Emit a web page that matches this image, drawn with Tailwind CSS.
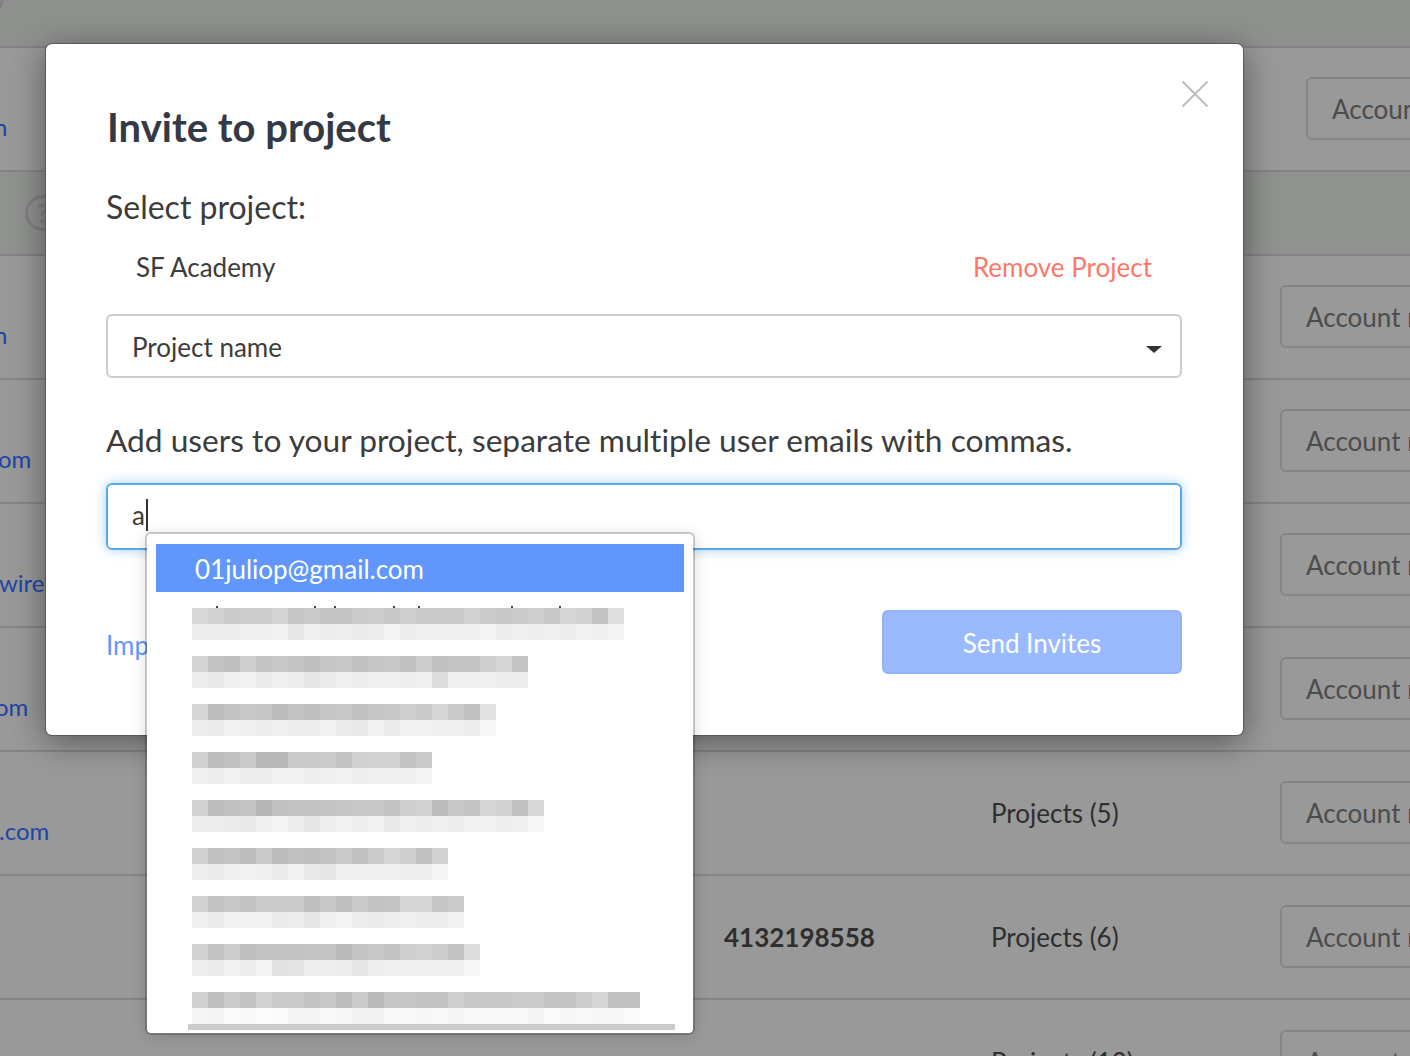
<!DOCTYPE html>
<html lang="en">
<head>
    <meta charset="UTF-8">
    <title>Invite to project</title>
    <script src="https://cdn.jsdelivr.net/npm/@tailwindcss/browser@4"></script>
</head>
<body class="relative w-[1410px] h-[1056px] overflow-hidden bg-[#999999] font-['Lato',sans-serif] [font-variant-ligatures:none] text-[26px] text-[#2e2e2e]">
    <!-- Table behind the modal -->
    <div class="flex flex-col">
        <div class="relative h-[48px] bg-[#8f918f] border-b-2 border-[#828382]">
            <div class="absolute -left-[32px] -top-[20px] w-[36px] h-[36px] rounded-full border-[3px] border-[#808080]"></div>
        </div>
        <div class="flex items-center h-[124px] border-b-2 border-[#858585]">
            <div class="shrink-0 w-[1306px] mt-[36px] text-[24px] text-[#1c45a5]"><span class="block -ml-[6px]">n</span></div>
            <div class="shrink-0 flex items-center w-[200px] h-[63px] -mt-[2px] pt-[2px] pl-[24px] border-2 border-[#858585] rounded-md text-[#4c4c4c] whitespace-nowrap">Account</div>
        </div>
        <div class="flex items-center h-[84px] bg-[#909290] border-b-2 border-[#828382] pl-[25px]">
            <div class="flex items-center justify-center w-[36px] h-[36px] rounded-full border-[3px] border-[#808080] text-[#808080] font-bold">?</div>
        </div>
        <div class="flex items-center h-[124px] border-b-2 border-[#858585]">
            <div class="shrink-0 w-[1280px] mt-[36px] text-[24px] text-[#1c45a5]"><span class="block -ml-[6px]">n</span></div>
            <div class="shrink-0 flex items-center w-[250px] h-[63px] -mt-[2px] pt-[2px] pl-[24px] border-2 border-[#858585] rounded-md text-[#4c4c4c] whitespace-nowrap">Account manager</div>
        </div>
        <div class="flex items-center h-[124px] border-b-2 border-[#858585]">
            <div class="shrink-0 w-[1280px] mt-[36px] text-[24px] text-[#1c45a5]"><span class="block -ml-[2px]">om</span></div>
            <div class="shrink-0 flex items-center w-[250px] h-[63px] -mt-[2px] pt-[2px] pl-[24px] border-2 border-[#858585] rounded-md text-[#4c4c4c] whitespace-nowrap">Account manager</div>
        </div>
        <div class="flex items-center h-[124px] border-b-2 border-[#858585]">
            <div class="shrink-0 w-[1280px] mt-[36px] text-[24px] text-[#1c45a5]"><span class="block -ml-[1px]">wire.</span></div>
            <div class="shrink-0 flex items-center w-[250px] h-[63px] -mt-[2px] pt-[2px] pl-[24px] border-2 border-[#858585] rounded-md text-[#4c4c4c] whitespace-nowrap">Account manager</div>
        </div>
        <div class="flex items-center h-[124px] border-b-2 border-[#858585]">
            <div class="shrink-0 w-[1280px] mt-[36px] text-[24px] text-[#1c45a5]"><span class="block -ml-[5px]">om</span></div>
            <div class="shrink-0 flex items-center w-[250px] h-[63px] -mt-[2px] pt-[2px] pl-[24px] border-2 border-[#858585] rounded-md text-[#4c4c4c] whitespace-nowrap">Account manager</div>
        </div>
        <div class="flex items-center h-[124px] border-b-2 border-[#858585]">
            <div class="shrink-0 w-[991px] mt-[36px] text-[24px] text-[#1c45a5]"><span class="block -ml-[1px]">.com</span></div>
            <div class="shrink-0 w-[289px] whitespace-nowrap">Projects (5)</div>
            <div class="shrink-0 flex items-center w-[250px] h-[63px] -mt-[2px] pt-[2px] pl-[24px] border-2 border-[#858585] rounded-md text-[#4c4c4c] whitespace-nowrap">Account manager</div>
        </div>
        <div class="flex items-center h-[124px] border-b-2 border-[#858585]">
            <div class="shrink-0 w-[724px]"></div>
            <div class="shrink-0 w-[267px] font-bold whitespace-nowrap">4132198558</div>
            <div class="shrink-0 w-[289px] whitespace-nowrap">Projects (6)</div>
            <div class="shrink-0 flex items-center w-[250px] h-[63px] -mt-[2px] pt-[2px] pl-[24px] border-2 border-[#858585] rounded-md text-[#4c4c4c] whitespace-nowrap">Account manager</div>
        </div>
        <div class="flex items-center h-[124px]">
            <div class="shrink-0 w-[991px]"></div>
            <div class="shrink-0 w-[289px] whitespace-nowrap">Projects (10)</div>
            <div class="shrink-0 flex items-center w-[250px] h-[63px] -mt-[2px] pt-[2px] pl-[24px] border-2 border-[#858585] rounded-md text-[#4c4c4c] whitespace-nowrap">Account manager</div>
        </div>
    </div>

    <!-- Modal -->
    <div class="absolute left-[46px] top-[44px] w-[1197px] h-[691px] bg-white rounded-md pt-[58px] pl-[60px] pr-[61px] shadow-[0_0_0_1px_#5a5a5a,0_6px_34px_rgba(0,0,0,0.45)]">
        <button class="absolute right-[34px] top-[36px] w-[28px] h-[28px] text-[#bdbdbd]">
            <svg viewBox="0 0 28 28" class="w-full h-full" fill="none" stroke="currentColor" stroke-width="2"><path d="M1.5 1.5 26.5 26.5M26.5 1.5 1.5 26.5"/></svg>
        </button>
        <h2 class="flex items-center h-[50px] text-[40px] font-bold text-[#343a45] pl-px">Invite to project</h2>
        <div class="flex items-center h-[40px] mt-[35px] text-[32px] text-[#3c3c3c]">Select project:</div>
        <div class="flex items-center justify-between h-[40px] mt-[20px] px-[30px] text-[#3c3c3c]">
            <span>SF Academy</span>
            <span class="text-[#ff7766]">Remove Project</span>
        </div>
        <div class="flex items-center justify-between h-[64px] mt-[27px] pl-[24px] pr-[18px] border-2 border-[#cccccc] rounded-md text-[#3c3c3c]">
            <span class="mt-[2px]">Project name</span>
            <span class="w-0 h-0 border-x-[8px] border-t-[7px] border-x-transparent border-t-[#333333] mt-[6px]"></span>
        </div>
        <div class="flex items-center h-[40px] mt-[43px] text-[31.7px] text-[#3c3c3c] whitespace-nowrap">Add users to your project, separate multiple user emails with commas.</div>
        <div class="flex items-center h-[67px] mt-[22px] pl-[24px] border-2 border-[#5aa9e6] rounded-md text-[#3c3c3c] shadow-[0_0_12px_rgba(90,169,230,0.55)]">
            <span class="mb-[2px]">a</span><span class="w-[2px] h-[32px] bg-[#333333] ml-[1px] mb-[4px]"></span>
        </div>
        <div class="flex items-center justify-between h-[64px] mt-[60px]">
            <a class="text-[#6197fd] mt-[6px]">Import</a>
            <button class="w-[300px] h-[64px] pt-[2px] bg-[#99baff] border-2 border-[#8fb3fb] rounded-md text-white">Send Invites</button>
        </div>
    </div>

    <!-- Autocomplete dropdown -->
    <div class="absolute left-[145px] top-[532px] w-[550px] h-[503px] bg-white bg-clip-padding border-2 border-black/20 rounded-md pt-[10px] px-[9px] shadow-[0_2px_14px_rgba(0,0,0,0.14)]">
        <div class="flex items-center h-[48px] w-[528px] pt-[2px] pl-[39px] bg-[#6197fd] text-white text-[26px]">01juliop@gmail.com</div>
        <div id="blurred" class="flex flex-col gap-[16px] mt-[16px] ml-[36px]"></div>
        <div class="absolute left-[41px] top-[490px] w-[487px] h-[6px] bg-[#cbcbcb]"></div>
    </div>

    <script>
        // pixelated addresses: grey values per 16px cell, upper and lower half
        const rows = [
            ['d8 d2 cc cd cd d4 c6 ca c5 c5 cb cd c8 ce ca c9 c9 d2 cb c8 cc ce c7 d6 d2 c3 de', 'ed ec ec f0 ef f2 e7 ef ec ee eb ed f3 ed f0 ef ef ef f3 ec f0 ee f0 ec f1 ef f4'],
            ['d4 c2 bf cf c4 c7 c5 bf c6 c7 c1 c6 c7 c0 cd c1 c5 c4 cf d6 c5', 'ed e9 ef f2 ea ef ed e6 ea f0 ec ef ef ee ef dc f0 ef ef ec ed'],
            ['d5 be c3 c8 c6 bc c2 bf c6 c8 c0 c6 c8 cf c9 d5 c9 c0 e2', 'ec ea f2 f0 ec f0 ec ec f2 ea e8 f1 eb f1 f1 f0 ef ed f6'],
            ['d0 bd c0 ca b8 b8 ca c9 cb c3 d0 d2 d2 c2 ca', 'ef ec f2 ec ed f2 f2 ee ef f1 ee f0 f0 ef f3'],
            ['d2 bd c1 c4 b7 c1 c3 c2 c4 c6 c8 c8 c2 cf d3 bb c8 c4 d6 d2 c1 d8', 'ec ec ea e8 f0 f3 ed e5 ee f2 ee f2 e9 ef ec f0 ed f2 f2 ee ef f6'],
            ['d1 c0 c4 bd ca bc c1 bf c3 c9 c1 cb d6 cf c0 d3', 'ee ea f0 f1 f0 eb f1 e8 e6 f0 f0 ef ef ee ee f5'],
            ['d3 c2 c8 c3 cc cb cc bf c7 bf ca c2 c5 d5 d5 c6 cc', 'ef ea f1 f1 f2 ea ec e6 ef f4 ec eb ee f0 ec ed f2'],
            ['d3 c2 cd bf c2 c3 c3 c4 c4 ba c4 c7 c2 cf d2 cd c2 dd', 'ee ea f2 ec f4 e1 e3 ee ee ec e6 ee f0 ef ef ef ef f7'],
            ['d0 bf cc c2 d3 c9 c9 c3 c8 bd cc ba c6 c6 c3 c3 cf c7 c7 c7 cc cb c5 c5 cd d6 c0 c0', 'f5 f3 fa f8 fc fb f4 f4 f9 f6 f2 f1 f8 f8 f7 f9 f5 f9 f8 f9 f9 f4 fa f7 f9 f6 f6 fa']
        ];
        const list = document.getElementById('blurred');
        rows.forEach(([top, bottom], i) => {
            const row = document.createElement('div');
            row.className = 'relative';
            [top, bottom].forEach(values => {
                const strip = document.createElement('div');
                strip.className = 'flex h-[16px]';
                values.split(' ').forEach(v => {
                    const cell = document.createElement('div');
                    cell.className = 'w-[16px] h-[16px]';
                    cell.style.background = '#' + v + v + v;
                    strip.appendChild(cell);
                });
                row.appendChild(strip);
            });
            // tops of the letters that stick out above the first address
            if (i === 0) {
                [24, 122, 142, 201, 226, 319, 367].forEach(x => {
                    const tick = document.createElement('div');
                    tick.className = 'absolute -top-[2px] w-[2px] h-[2px] bg-[#444444]';
                    tick.style.left = x + 'px';
                    row.appendChild(tick);
                });
            }
            list.appendChild(row);
        });
    </script>
</body>
</html>
